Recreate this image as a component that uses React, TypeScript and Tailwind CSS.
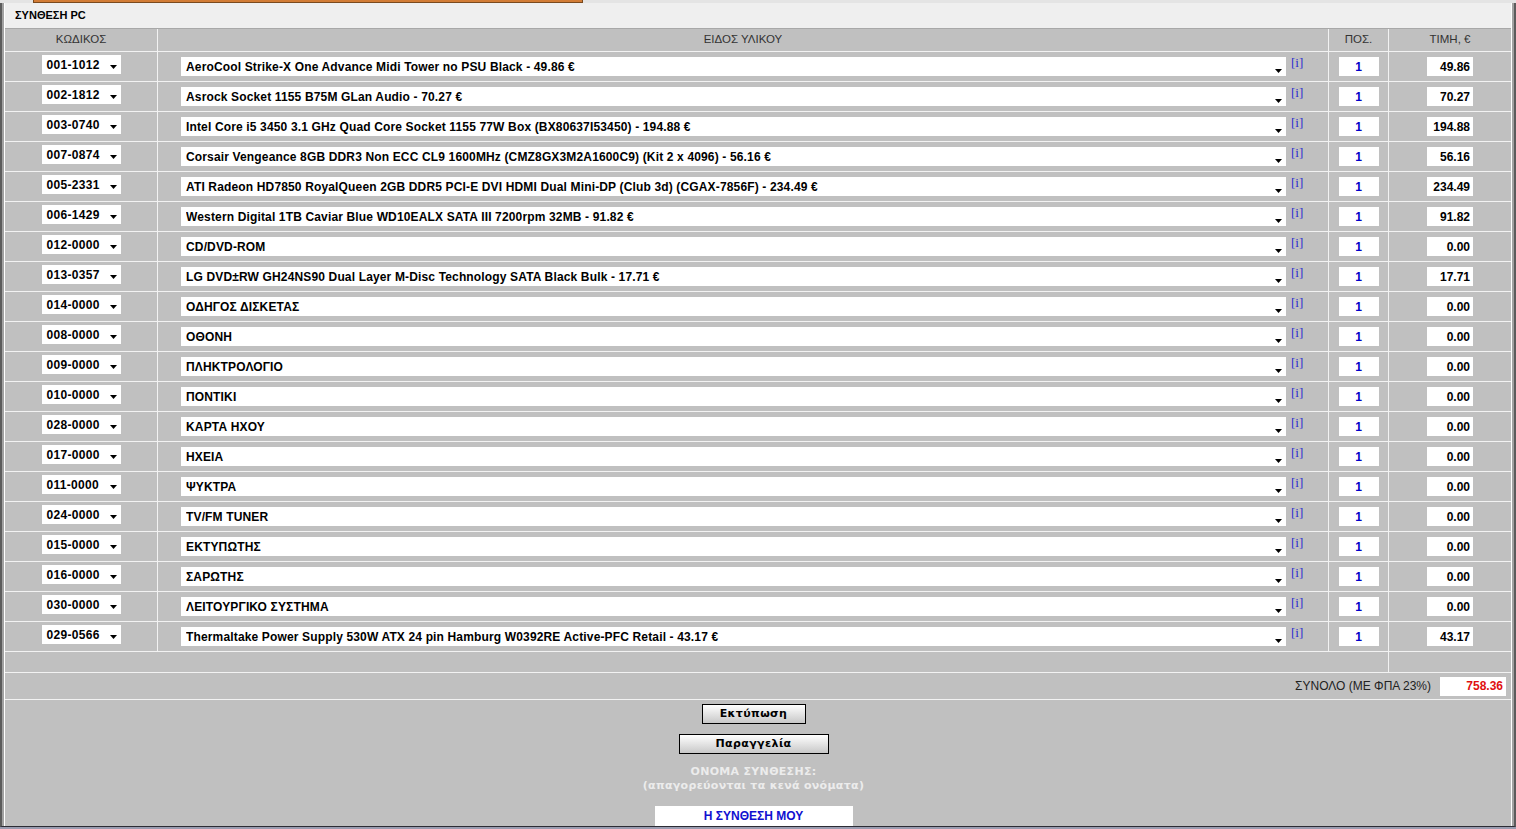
const rows: [string, string, string][] = [
  ["001-1012", "AeroCool Strike-X One Advance Midi Tower no PSU Black - 49.86 €", "49.86"],
  ["002-1812", "Asrock Socket 1155 B75M GLan Audio - 70.27 €", "70.27"],
  ["003-0740", "Intel Core i5 3450 3.1 GHz Quad Core Socket 1155 77W Box (BX80637I53450) - 194.88 €", "194.88"],
  ["007-0874", "Corsair Vengeance 8GB DDR3 Non ECC CL9 1600MHz (CMZ8GX3M2A1600C9) (Kit 2 x 4096) - 56.16 €", "56.16"],
  ["005-2331", "ATI Radeon HD7850 RoyalQueen 2GB DDR5 PCI-E DVI HDMI Dual Mini-DP (Club 3d) (CGAX-7856F) - 234.49 €", "234.49"],
  ["006-1429", "Western Digital 1TB Caviar Blue WD10EALX SATA III 7200rpm 32MB - 91.82 €", "91.82"],
  ["012-0000", "CD/DVD-ROM", "0.00"],
  ["013-0357", "LG DVD±RW GH24NS90 Dual Layer M-Disc Technology SATA Black Bulk - 17.71 €", "17.71"],
  ["014-0000", "ΟΔΗΓΟΣ ΔΙΣΚΕΤΑΣ", "0.00"],
  ["008-0000", "ΟΘΟΝΗ", "0.00"],
  ["009-0000", "ΠΛΗΚΤΡΟΛΟΓΙΟ", "0.00"],
  ["010-0000", "ΠΟΝΤΙΚΙ", "0.00"],
  ["028-0000", "ΚΑΡΤΑ ΗΧΟΥ", "0.00"],
  ["017-0000", "ΗΧΕΙΑ", "0.00"],
  ["011-0000", "ΨΥΚΤΡΑ", "0.00"],
  ["024-0000", "TV/FM TUNER", "0.00"],
  ["015-0000", "ΕΚΤΥΠΩΤΗΣ", "0.00"],
  ["016-0000", "ΣΑΡΩΤΗΣ", "0.00"],
  ["030-0000", "ΛΕΙΤΟΥΡΓΙΚΟ ΣΥΣΤΗΜΑ", "0.00"],
  ["029-0566", "Thermaltake Power Supply 530W ATX 24 pin Hamburg W0392RE Active-PFC Retail - 43.17 €", "43.17"],
];

function Arrow() {
  return (
    <svg width="7" height="4" viewBox="0 0 7 4" className="shrink-0">
      <path d="M0 0H7L3.5 4Z" fill="#000" />
    </svg>
  );
}

function Row({ code, name, price }: { code: string; name: string; price: string }) {
  return (
    <div className="flex h-[30px] border-b border-[#f2f2f2]">
      <div className="flex w-[153px] shrink-0 justify-center border-r border-[#f2f2f2] pt-[3px]">
        <div className="flex h-[19px] w-[79px] items-center bg-white pl-[5px] pr-[4px]">
          <span className="flex-1 text-[12px] font-bold tracking-[0.3px] text-black">{code}</span>
          <div className="mt-[5px]">
            <Arrow />
          </div>
        </div>
      </div>
      <div className="flex w-[1171px] shrink-0 border-r border-[#f2f2f2] pl-[23px]">
        <div className="mt-[5px] flex h-[19px] w-[1105px] items-center bg-white pl-[5px] pr-[4px]">
          <span className="flex-1 truncate text-[12px] font-bold tracking-[0.15px] text-black">{name}</span>
          <div className="mt-[8px]">
            <Arrow />
          </div>
        </div>
        <span className="ml-[5px] mt-[4px] font-['Liberation_Serif',serif] text-[13px] leading-[13px] text-[#2b2bd0]">[i]</span>
      </div>
      <div className="flex w-[60px] shrink-0 justify-center border-r border-[#f2f2f2] pt-[5px]">
        <div className="flex h-[19px] w-[40px] items-center justify-center bg-white text-[12px] font-bold text-[#0000c8]">1</div>
      </div>
      <div className="flex flex-1 justify-center pt-[5px]">
        <div className="flex h-[19px] w-[46px] items-center justify-end bg-white pr-[3px] text-[12px] font-bold text-black">{price}</div>
      </div>
    </div>
  );
}

export default function App() {
  return (
    <div className="flex h-[829px] w-[1516px] flex-col overflow-hidden bg-white font-['Liberation_Sans',Arial,sans-serif]">
      <div className="h-[3px] shrink-0 bg-[#e4e4e4]">
        <div className="ml-[33px] h-[3px] w-[550px] border-x border-b border-[#7a4a1e] bg-[#d27c36]" />
      </div>
      <div className="flex min-h-0 flex-1 border-x-[2px] border-b border-[#5c5c5c] border-b-[#2c2c34]">
        <div className="flex min-h-0 flex-1 border-x-[2px] border-[#a2a2a2]">
          <div className="flex min-h-0 flex-1 flex-col border-x border-white bg-[#c0c0c0]">
            <div className="flex h-[26px] shrink-0 items-center border-b border-[#a8a8a8] bg-[#efefef] pl-[10px] text-[11px] font-bold text-black">
              ΣΥΝΘΕΣΗ PC
            </div>
            <div className="flex h-[23px] shrink-0 border-b border-[#f2f2f2] text-[11.5px] text-[#333]">
              <div className="flex w-[153px] items-center justify-center border-r border-[#f2f2f2]">ΚΩΔΙΚΟΣ</div>
              <div className="flex w-[1171px] items-center justify-center border-r border-[#f2f2f2]">ΕΙΔΟΣ ΥΛΙΚΟΥ</div>
              <div className="flex w-[60px] items-center justify-center border-r border-[#f2f2f2]">ΠΟΣ.</div>
              <div className="flex flex-1 items-center justify-center">ΤΙΜΗ, €</div>
            </div>
            {rows.map(([c, n, p]) => (
              <Row key={c} code={c} name={n} price={p} />
            ))}
            <div className="flex h-[21px] shrink-0 border-b border-[#f2f2f2]">
              <div className="w-[1384px] border-r border-[#f2f2f2]" />
              <div className="flex-1" />
            </div>
            <div className="flex h-[27px] shrink-0 items-center justify-end border-b border-[#f2f2f2] pr-[5px]">
              <span className="mr-[9px] text-[12px] text-[#222]">ΣΥΝΟΛΟ (ΜΕ ΦΠΑ 23%)</span>
              <div className="flex h-[19px] w-[66px] items-center justify-end bg-white pr-[3px] text-[12px] font-bold text-[#e01010]">
                758.36
              </div>
            </div>
            <div className="flex min-h-0 flex-1 flex-col items-center overflow-hidden pr-[9px] pt-[4px] font-['DejaVu_Sans',Verdana,sans-serif]">
              <button className="h-[20px] w-[104px] border border-black bg-gradient-to-b from-white to-[#c8c8c8] text-[11px] font-bold tracking-[0.4px] text-black">
                Εκτύπωση
              </button>
              <button className="mt-[10px] h-[21px] w-[150px] border border-black bg-gradient-to-b from-white to-[#c8c8c8] text-[11px] font-bold tracking-[0.4px] text-black">
                Παραγγελία
              </button>
              <div className="mt-[11px] text-center text-[11px] font-bold leading-[14px] tracking-[0.3px] text-[#ececec]">
                ΟΝΟΜΑ ΣΥΝΘΕΣΗΣ:
                <br />
                (απαγορεύονται τα κενά ονόματα)
              </div>
              <div className="mt-[13px] flex h-[20px] w-[198px] shrink-0 items-center justify-center bg-white font-['Liberation_Sans',Arial,sans-serif] text-[12px] font-bold text-[#1010d0]">
                Η ΣΥΝΘΕΣΗ ΜΟΥ
              </div>
            </div>
          </div>
        </div>
      </div>
      <div className="h-[2px] shrink-0 bg-[#9a9cb0]" />
    </div>
  );
}
